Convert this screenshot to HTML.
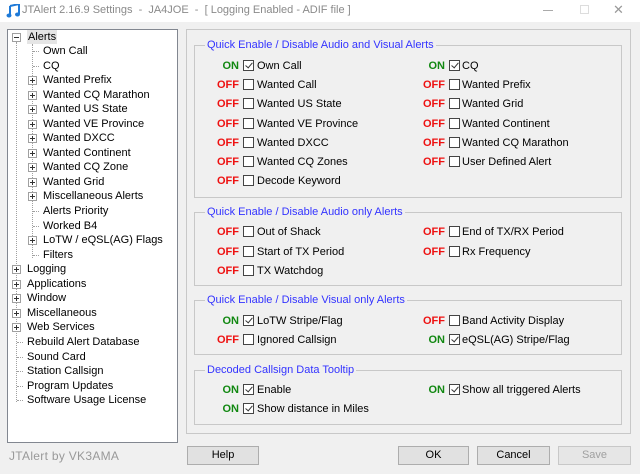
<!DOCTYPE html>
<html><head><meta charset="utf-8"><style>
*{margin:0;padding:0;box-sizing:border-box}
body{width:640px;height:474px;background:#f0f0f0;font-family:"Liberation Sans","DejaVu Sans",sans-serif;font-size:11px;color:#000;position:relative;overflow:hidden}
.a{position:absolute;white-space:nowrap}
#title{left:0;top:0;width:640px;height:22px;background:#fff}
#tree{left:7px;top:29px;width:171px;height:414px;background:#fff;border:1px solid #828790}
.t{position:absolute;white-space:nowrap;line-height:14px}
.pb{position:absolute;width:9px;height:9px;border:1px solid #a0a0a0;background:#fff}
.pb:before{content:"";position:absolute;left:1px;top:3px;width:5px;height:1px;background:#333}
.pb.p:after{content:"";position:absolute;left:3px;top:1px;width:1px;height:5px;background:#333}
.dh{position:absolute;height:0;border-top:1px dotted #a0a0a0;width:6px}
.dv{position:absolute;width:0;border-left:1px dotted #a0a0a0}
#panel{left:186px;top:29px;width:445px;height:405px;border:1px solid #c8c8c8}
.g{position:absolute;left:194px;width:428px;border:1px solid #c8c8c8}
.lg{position:absolute;left:205px;color:#3333ff;background:#f0f0f0;padding:0 2px;line-height:13px}
.on{color:#118811;font-weight:bold}
.off{color:#ee1111;font-weight:bold}
.s{position:absolute;text-align:right;width:40px;line-height:13px}
.cb{position:absolute;width:11px;height:11px;border:1px solid #444;background:#fff}
.cb.c:after{content:"";position:absolute;left:3px;top:0px;width:3px;height:6px;border:solid #333;border-width:0 1.3px 1.3px 0;transform:rotate(40deg)}
.lb{position:absolute;line-height:13px;white-space:nowrap}
.btn{position:absolute;top:446px;height:19px;border:1px solid #adadad;background:#e1e1e1;text-align:center;line-height:17px}
</style></head><body>
<div id="title" class="a"></div>
<svg class="a" style="left:6px;top:4px" width="14" height="14" viewBox="0 0 14 14"><path d="M4 2 L13 0 V10" stroke="#1e7ad8" stroke-width="2" fill="none"/><path d="M4 2 V11" stroke="#1e7ad8" stroke-width="2"/><ellipse cx="3" cy="11.5" rx="2.5" ry="2" fill="#1e7ad8"/><ellipse cx="11.5" cy="10.5" rx="2.5" ry="2" fill="#1e7ad8"/></svg>
<div class="a" style="left:22px;top:4px;color:#8a8a8a;font-size:11px">JTAlert 2.16.9 Settings&nbsp; -&nbsp; JA4JOE&nbsp; -&nbsp; [ Logging Enabled - ADIF file ]</div>
<div class="a" style="left:543px;top:10px;width:10px;height:1px;background:#aaa"></div>
<div class="a" style="left:580px;top:5px;width:9px;height:9px;border:1px solid #ddd"></div>
<div class="a" style="left:613px;top:2px;font-size:13px;color:#999">✕</div>

<div id="tree" class="a"></div>
<div class="dv" style="left:16px;top:42px;height:360px"></div>
<div class="dv" style="left:32px;top:44px;height:214px"></div>
<div class="pb" style="left:12px;top:33px"></div>
<div class="t" style="left:27px;top:30px;background:#e5e5e5;padding:0 1px">Alerts</div>

<div class="dh" style="left:33px;top:51px"></div><div class="t" style="left:43px;top:44px">Own Call</div>
<div class="dh" style="left:33px;top:66px"></div><div class="t" style="left:43px;top:59px">CQ</div>
<div class="pb p" style="left:28px;top:76px"></div><div class="t" style="left:43px;top:73px">Wanted Prefix</div>
<div class="pb p" style="left:28px;top:91px"></div><div class="t" style="left:43px;top:88px">Wanted CQ Marathon</div>
<div class="pb p" style="left:28px;top:105px"></div><div class="t" style="left:43px;top:102px">Wanted US State</div>
<div class="pb p" style="left:28px;top:120px"></div><div class="t" style="left:43px;top:117px">Wanted VE Province</div>
<div class="pb p" style="left:28px;top:134px"></div><div class="t" style="left:43px;top:131px">Wanted DXCC</div>
<div class="pb p" style="left:28px;top:149px"></div><div class="t" style="left:43px;top:146px">Wanted Continent</div>
<div class="pb p" style="left:28px;top:163px"></div><div class="t" style="left:43px;top:160px">Wanted CQ Zone</div>
<div class="pb p" style="left:28px;top:178px"></div><div class="t" style="left:43px;top:175px">Wanted Grid</div>
<div class="pb p" style="left:28px;top:192px"></div><div class="t" style="left:43px;top:189px">Miscellaneous Alerts</div>
<div class="dh" style="left:33px;top:211px"></div><div class="t" style="left:43px;top:204px">Alerts Priority</div>
<div class="dh" style="left:33px;top:226px"></div><div class="t" style="left:43px;top:219px">Worked B4</div>
<div class="pb p" style="left:28px;top:236px"></div><div class="t" style="left:43px;top:233px">LoTW / eQSL(AG) Flags</div>
<div class="dh" style="left:33px;top:255px"></div><div class="t" style="left:43px;top:248px">Filters</div>

<div class="pb p" style="left:12px;top:265px"></div><div class="t" style="left:27px;top:262px">Logging</div>
<div class="pb p" style="left:12px;top:280px"></div><div class="t" style="left:27px;top:277px">Applications</div>
<div class="pb p" style="left:12px;top:294px"></div><div class="t" style="left:27px;top:291px">Window</div>
<div class="pb p" style="left:12px;top:309px"></div><div class="t" style="left:27px;top:306px">Miscellaneous</div>
<div class="pb p" style="left:12px;top:323px"></div><div class="t" style="left:27px;top:320px">Web Services</div>
<div class="dh" style="left:17px;top:342px"></div><div class="t" style="left:27px;top:335px">Rebuild Alert Database</div>
<div class="dh" style="left:17px;top:357px"></div><div class="t" style="left:27px;top:350px">Sound Card</div>
<div class="dh" style="left:17px;top:371px"></div><div class="t" style="left:27px;top:364px">Station Callsign</div>
<div class="dh" style="left:17px;top:386px"></div><div class="t" style="left:27px;top:379px">Program Updates</div>
<div class="dh" style="left:17px;top:400px"></div><div class="t" style="left:27px;top:393px">Software Usage License</div>

<div id="panel" class="a"></div>
<div class="g" style="top:45px;height:153px"></div>
<div class="lg" style="top:39px">Quick Enable / Disable Audio and Visual Alerts</div>
<div class="g" style="top:212px;height:74px"></div>
<div class="lg" style="top:206px">Quick Enable / Disable Audio only Alerts</div>
<div class="g" style="top:300px;height:55px"></div>
<div class="lg" style="top:294px">Quick Enable / Disable Visual only Alerts</div>
<div class="g" style="top:370px;height:55px"></div>
<div class="lg" style="top:364px">Decoded Callsign Data Tooltip</div>

<div class="s on" style="left:199px;top:60px">ON</div><div class="cb c" style="left:243px;top:60px"></div><div class="lb" style="left:257px;top:60px">Own Call</div>
<div class="s on" style="left:405px;top:60px">ON</div><div class="cb c" style="left:449px;top:60px"></div><div class="lb" style="left:462px;top:60px">CQ</div>
<div class="s off" style="left:199px;top:79px">OFF</div><div class="cb" style="left:243px;top:79px"></div><div class="lb" style="left:257px;top:79px">Wanted Call</div>
<div class="s off" style="left:405px;top:79px">OFF</div><div class="cb" style="left:449px;top:79px"></div><div class="lb" style="left:462px;top:79px">Wanted Prefix</div>
<div class="s off" style="left:199px;top:98px">OFF</div><div class="cb" style="left:243px;top:98px"></div><div class="lb" style="left:257px;top:98px">Wanted US State</div>
<div class="s off" style="left:405px;top:98px">OFF</div><div class="cb" style="left:449px;top:98px"></div><div class="lb" style="left:462px;top:98px">Wanted Grid</div>
<div class="s off" style="left:199px;top:118px">OFF</div><div class="cb" style="left:243px;top:118px"></div><div class="lb" style="left:257px;top:118px">Wanted VE Province</div>
<div class="s off" style="left:405px;top:118px">OFF</div><div class="cb" style="left:449px;top:118px"></div><div class="lb" style="left:462px;top:118px">Wanted Continent</div>
<div class="s off" style="left:199px;top:137px">OFF</div><div class="cb" style="left:243px;top:137px"></div><div class="lb" style="left:257px;top:137px">Wanted DXCC</div>
<div class="s off" style="left:405px;top:137px">OFF</div><div class="cb" style="left:449px;top:137px"></div><div class="lb" style="left:462px;top:137px">Wanted CQ Marathon</div>
<div class="s off" style="left:199px;top:156px">OFF</div><div class="cb" style="left:243px;top:156px"></div><div class="lb" style="left:257px;top:156px">Wanted CQ Zones</div>
<div class="s off" style="left:405px;top:156px">OFF</div><div class="cb" style="left:449px;top:156px"></div><div class="lb" style="left:462px;top:156px">User Defined Alert</div>
<div class="s off" style="left:199px;top:175px">OFF</div><div class="cb" style="left:243px;top:175px"></div><div class="lb" style="left:257px;top:175px">Decode Keyword</div>

<div class="s off" style="left:199px;top:226px">OFF</div><div class="cb" style="left:243px;top:226px"></div><div class="lb" style="left:257px;top:226px">Out of Shack</div>
<div class="s off" style="left:405px;top:226px">OFF</div><div class="cb" style="left:449px;top:226px"></div><div class="lb" style="left:462px;top:226px">End of TX/RX Period</div>
<div class="s off" style="left:199px;top:246px">OFF</div><div class="cb" style="left:243px;top:246px"></div><div class="lb" style="left:257px;top:246px">Start of TX Period</div>
<div class="s off" style="left:405px;top:246px">OFF</div><div class="cb" style="left:449px;top:246px"></div><div class="lb" style="left:462px;top:246px">Rx Frequency</div>
<div class="s off" style="left:199px;top:265px">OFF</div><div class="cb" style="left:243px;top:265px"></div><div class="lb" style="left:257px;top:265px">TX Watchdog</div>

<div class="s on" style="left:199px;top:315px">ON</div><div class="cb c" style="left:243px;top:315px"></div><div class="lb" style="left:257px;top:315px">LoTW Stripe/Flag</div>
<div class="s off" style="left:405px;top:315px">OFF</div><div class="cb" style="left:449px;top:315px"></div><div class="lb" style="left:462px;top:315px">Band Activity Display</div>
<div class="s off" style="left:199px;top:334px">OFF</div><div class="cb" style="left:243px;top:334px"></div><div class="lb" style="left:257px;top:334px">Ignored Callsign</div>
<div class="s on" style="left:405px;top:334px">ON</div><div class="cb c" style="left:449px;top:334px"></div><div class="lb" style="left:462px;top:334px">eQSL(AG) Stripe/Flag</div>

<div class="s on" style="left:199px;top:384px">ON</div><div class="cb c" style="left:243px;top:384px"></div><div class="lb" style="left:257px;top:384px">Enable</div>
<div class="s on" style="left:405px;top:384px">ON</div><div class="cb c" style="left:449px;top:384px"></div><div class="lb" style="left:462px;top:384px">Show all triggered Alerts</div>
<div class="s on" style="left:199px;top:403px">ON</div><div class="cb c" style="left:243px;top:403px"></div><div class="lb" style="left:257px;top:403px">Show distance in Miles</div>

<div class="a" style="left:9px;top:449px;color:#999;font-size:12px;letter-spacing:0.3px">JTAlert by VK3AMA</div>
<div class="btn" style="left:187px;width:72px">Help</div>
<div class="btn" style="left:398px;width:71px">OK</div>
<div class="btn" style="left:477px;width:73px">Cancel</div>
<div class="btn" style="left:558px;width:73px;color:#a0a0a0;border-color:#c8c8c8;background:#e6e6e6">Save</div>
</body></html>
